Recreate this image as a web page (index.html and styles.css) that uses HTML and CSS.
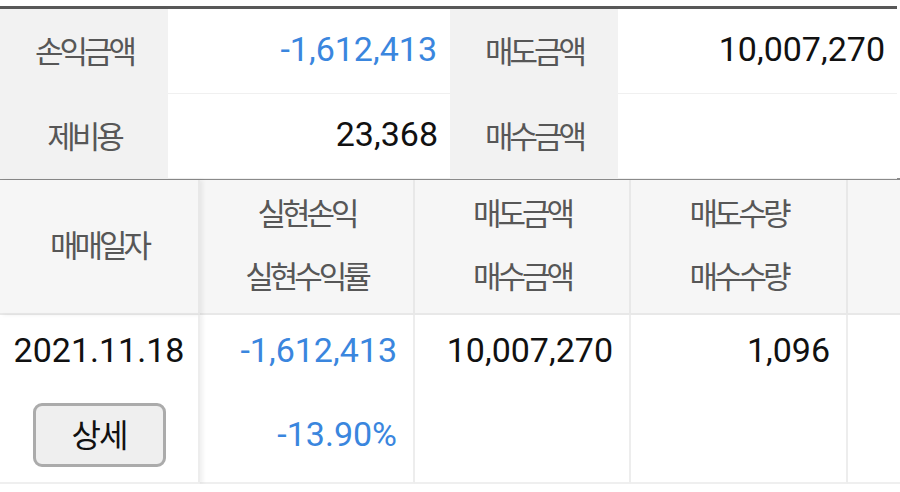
FILE: index.html
```html
<!DOCTYPE html>
<html lang="ko">
<head>
    <meta charset="UTF-8" />
    <title>매매내역</title>
    <link rel="stylesheet" href="styles.css">
</head>
<body>
    <!-- ===== 요약 ===== -->
    <div class="summary">
        <div class="sum-label">손익금액</div>
        <div class="sum-value loss">-1,612,413</div>
        <div class="sum-label">매도금액</div>
        <div class="sum-value">10,007,270</div>
        <div class="sum-label">제비용</div>
        <div class="sum-value">23,368</div>
        <div class="sum-label">매수금액</div>
        <div class="sum-value"></div>
    </div>

    <!-- ===== 내역 ===== -->
    <div class="trades">
        <div class="th fixed"><span>매매일자</span></div>
        <div class="th"><span>실현손익</span><span>실현수익률</span></div>
        <div class="th"><span>매도금액</span><span>매수금액</span></div>
        <div class="th"><span>매도수량</span><span>매수수량</span></div>
        <div class="th last"></div>

        <div class="td fixed center">
            <span class="num">2021.11.18</span>
            <button class="btn-detail">상세</button>
        </div>
        <div class="td">
            <span class="num loss">-1,612,413</span>
            <span class="num loss">-13.90%</span>
        </div>
        <div class="td">
            <span class="num">10,007,270</span>
        </div>
        <div class="td">
            <span class="num">1,096</span>
        </div>
        <div class="td last"></div>
    </div>
</body>
</html>
```

FILE: styles.css
```css
:root {
    --loss: #3a86de;
    --text: #111;
    --label: #575757;
    --label-bg: #f2f2f2;
    --head-bg: #f6f6f6;
    --line: #e8e8e8;
}

body {
    margin: 0;
    background: #fff;
    color: var(--text);
    font-family: Roboto, "Noto Sans CJK KR", sans-serif;
}

/* ===== 요약 ===== */
.summary {
    width: 897px;
    margin-top: 6px;
    border-top: 3px solid #585858;
    display: grid;
    grid-template-columns: 168px 282px 168px 279px;
    grid-auto-rows: 85px;
}
.sum-label {
    background: var(--label-bg);
    color: var(--label);
    font-family: "Noto Sans CJK KR", sans-serif;
    font-size: 31px;
    letter-spacing: -4px;
    display: flex;
    align-items: center;
    justify-content: center;
    padding-bottom: 4px;
    box-sizing: border-box;
}
.sum-value {
    font-size: 34px;
    display: flex;
    align-items: center;
    justify-content: flex-end;
    padding: 0 12px 4px 0;
    border-bottom: 1px solid #f0f0f0;
    box-sizing: border-box;
}
.summary .sum-value:nth-child(2) { padding-right: 13px; }
.loss { color: var(--loss); }

/* ===== 내역 ===== */
.trades {
    border-top: 2px solid #8a8a8a;
    margin-top: -1px;
    display: grid;
    grid-template-columns: 200px 215px 216px 217px 1fr;
    grid-template-rows: 135px 169px;
}
.th {
    background: var(--head-bg);
    color: var(--label);
    font-family: "Noto Sans CJK KR", sans-serif;
    font-size: 31px;
    letter-spacing: -4px;
    display: flex;
    flex-direction: column;
    align-items: center;
    justify-content: space-around;
    padding: 0 0 7px;
    border-right: 2px solid var(--line);
    border-bottom: 2px solid var(--line);
}
.th.fixed { justify-content: center; }
.td {
    display: flex;
    flex-direction: column;
    align-items: flex-end;
    gap: 44px;
    padding: 15px 16px 0 0;
    border-right: 2px solid #ededed;
    border-bottom: 2px solid #efefef;
}
.fixed {
    position: relative;
    z-index: 1;
    box-shadow: 3px 0 4px rgba(0, 0, 0, 0.06);
}
.td.center {
    align-items: center;
    padding-right: 0;
    gap: 33px;
}
.last { border-right: none; }
.num {
    font-size: 34px;
    line-height: 40px;
}

.btn-detail {
    width: 133px;
    height: 64px;
    border: 3px solid #ababab;
    border-radius: 9px;
    background: #efefef;
    color: #111;
    font-family: "Noto Sans CJK KR", sans-serif;
    font-size: 32px;
    letter-spacing: -2px;
    padding: 0 0 4px;
}
```
